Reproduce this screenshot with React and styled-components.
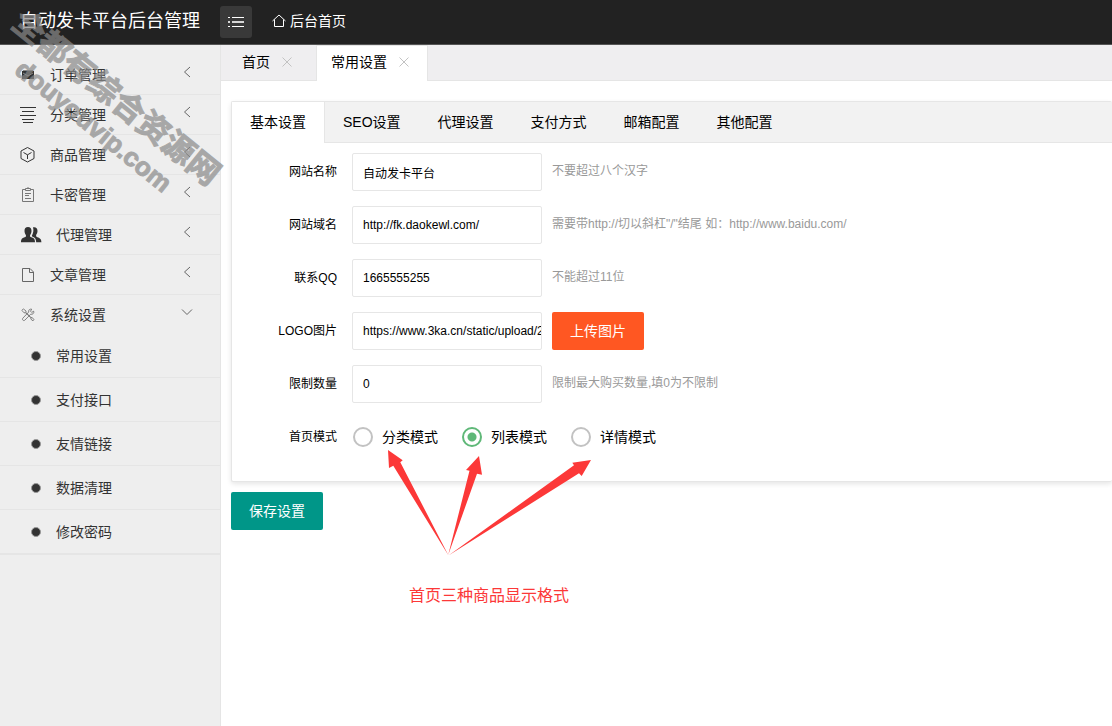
import React, { useState } from "react";
import styled, { createGlobalStyle, css } from "styled-components";

const GlobalStyle = createGlobalStyle`
  *, *::before, *::after { box-sizing: border-box; }
  body {
    margin: 0;
    background: #fff;
    color: #000;
    font: 14px/24px "Liberation Sans", "Noto Sans CJK SC", sans-serif;
  }
  button, input { font-family: inherit; }
  a { color: inherit; text-decoration: none; }
  ul { margin: 0; padding: 0; list-style: none; }
`;

const Page = styled.div`
  position: relative;
  display: flex;
  flex-direction: column;
  min-height: 100vh;
  overflow: hidden;
`;

const Header = styled.header`
  display: flex;
  align-items: center;
  height: 45px;
  background: #222;
  border-bottom: 1px solid #555;
  color: #fff;
`;

const Brand = styled.a`
  width: 220px;
  height: 44px;
  padding-left: 20px;
  font-size: 18px;
  line-height: 42px;
  white-space: nowrap;
`;

const MenuButton = styled.button`
  display: flex;
  align-items: center;
  justify-content: center;
  width: 32px;
  height: 32px;
  padding: 0;
  border: 0;
  border-radius: 3px;
  background: #393939;
  color: #fff;
`;

const HomeLink = styled.a`
  display: flex;
  align-items: center;
  gap: 4px;
  margin-left: 20px;
  padding-bottom: 2px;
`;

const Body = styled.div`
  display: flex;
  flex: 1;
`;

const Sidebar = styled.nav`
  flex: none;
  width: 221px;
  padding-top: 10px;
  background: #eee;
  border-right: 1px solid #e5e5e5;
  color: #333;
`;

const MenuItem = styled.a`
  display: flex;
  align-items: center;
  height: ${(p) => (p.$open ? "39px" : "40px")};
  padding: 0 27px 0 20px;
  border-bottom: ${(p) => (p.$open ? "0" : "1px solid #e5e5e5")};
`;

const MenuIcon = styled.span`
  display: flex;
  flex: none;
  min-width: 16px;
  margin-right: 14px;
`;

const Arrow = styled.svg`
  margin-left: auto;
  margin-bottom: 6px;
  color: #666;
`;

const SubMenu = styled.ul`
  border-bottom: 1px solid #e5e5e5;
`;

const SubItem = styled.a`
  display: flex;
  align-items: center;
  gap: 15px;
  height: 44px;
  padding-left: 31px;
  border-bottom: 1px solid #e5e5e5;
`;

const Dot = styled.span`
  width: 10px;
  height: 10px;
  border: 1px solid #999;
  border-radius: 50%;
  background: #333;
`;

const Main = styled.main`
  position: relative;
  flex: 1;
  min-width: 0;
`;

const PageTabs = styled.div`
  display: flex;
  gap: 6px;
  height: 36px;
  padding-left: 7px;
  background: #efeef0;
  border-bottom: 1px solid #e5e5e5;
`;

const PageTab = styled.div`
  display: flex;
  align-items: center;
  gap: 12px;
  height: 35px;
  padding: 0 18px 2px 14px;
  ${(p) =>
    p.$active &&
    css`
      height: 36px;
      padding-bottom: 4px;
      background: #fff;
      border: 1px solid #e5e5e5;
      border-bottom: 0;
    `}
`;

const CloseButton = styled.button`
  display: flex;
  padding: 0;
  border: 0;
  background: none;
  color: #c2c2c2;
`;

const Content = styled.form`
  padding: 20px 0 20px 10px;
`;

const Card = styled.section`
  border: 1px solid #e6e6e6;
  border-right: 0;
  border-radius: 2px;
  box-shadow: 0 2px 5px 0 rgba(0, 0, 0, 0.1);
`;

const CardTabs = styled.div`
  display: flex;
  height: 41px;
  background: #f2f2f2;
  border-bottom: 1px solid #e6e6e6;
`;

const CardTab = styled.button`
  height: 41px;
  padding: 0 18px 2px;
  border: 0;
  border-right: 1px solid ${(p) => (p.$active ? "#e6e6e6" : "transparent")};
  background: ${(p) => (p.$active ? "#fff" : "none")};
  color: #000;
  font-size: 14px;
  line-height: 38px;
  white-space: nowrap;
`;

const Fields = styled.div`
  display: flex;
  flex-direction: column;
  gap: 15px;
  padding: 10px 0 25px;
`;

const Row = styled.div`
  display: flex;
  align-items: center;
  height: 38px;
`;

const labelText = css`
  flex: none;
  width: 120px;
  padding-right: 15px;
  font-size: 12px;
  line-height: 20px;
  text-align: right;
`;

const Label = styled.label`
  ${labelText}
`;

const GroupLabel = styled.span`
  ${labelText}
`;

const TextInput = styled.input`
  flex: none;
  width: 190px;
  height: 38px;
  padding: 0 0 0 10px;
  border: 1px solid #e6e6e6;
  border-radius: 2px;
  background: #fff;
  color: #000;
  font-size: 12px;
`;

const Hint = styled.span`
  padding: 0 0 2px 10px;
  color: #999;
  font-size: 12px;
  line-height: 20px;
`;

const Button = styled.button`
  height: 38px;
  padding: 0 18px;
  border: 0;
  border-radius: 2px;
  background: ${(p) => p.$color};
  color: #fff;
  font-size: 14px;
  line-height: 38px;
  white-space: nowrap;
`;

const UploadButton = styled(Button)`
  margin-left: 10px;
`;

const SaveButton = styled(Button)`
  margin-top: 10px;
`;

const RadioGroup = styled.div`
  display: flex;
  gap: 23px;
`;

const RadioLabel = styled.label`
  display: flex;
  align-items: center;
  gap: 9px;
`;

const Radio = styled.input`
  appearance: none;
  width: 20px;
  height: 20px;
  margin: 0 0 0 1px;
  border: 2px solid #c2c2c2;
  border-radius: 50%;
  &:checked {
    border-color: #5fb878;
    background: radial-gradient(circle, #5fb878 4px, transparent 5px);
  }
`;

const Annotation = styled.figure`
  position: absolute;
  left: 160px;
  top: 400px;
  width: 230px;
  margin: 0;
  color: #fc3838;
  pointer-events: none;
`;

const Caption = styled.figcaption`
  padding: 21px 0 0 28px;
  font-size: 16px;
  line-height: 24px;
  white-space: nowrap;
`;

const ArrowDrawing = styled.svg`
  display: block;
`;

const Watermark = styled.div`
  position: absolute;
  left: -25px;
  top: 76px;
  width: 260px;
  transform: rotate(39deg);
  opacity: 0.7;
  color: #8a8a8a;
  -webkit-text-stroke: 1px #8a8a8a;
  font-weight: 700;
  line-height: 36px;
  text-align: center;
  white-space: nowrap;
  pointer-events: none;
`;

const WatermarkName = styled.div`
  font-size: 32px;
`;

const WatermarkSite = styled.div`
  font-size: 26px;
`;

const stroke = { fill: "none", stroke: "currentColor", strokeWidth: 1 };

const icons = {
  orders: (
    <svg width="16" height="16" viewBox="0 0 16 16">
      <path d="M2 4h12v8H2z" fill="#333" />
      <path d="M3 3.500h10M3 6l5 3 5-3" stroke="#888" fill="none" />
    </svg>
  ),
  category: (
    <svg width="16" height="16" viewBox="0 0 16 16" {...stroke}>
      <path d="M0 .500h16M2 4.500h12M0 8.500h16M2 12.500h12M3 15.500h10" />
    </svg>
  ),
  goods: (
    <svg width="16" height="16" viewBox="0 0 16 16" {...stroke}>
      <path d="M7.500.500 14 4v7.500l-6.500 3.500L1 11.500V4z" />
      <path d="M3.500 5.500l4 2.300 4-2.300M7.500 7.800v4.200" />
    </svg>
  ),
  cards: (
    <svg width="16" height="16" viewBox="0 0 16 16" fill="none" stroke="#777">
      <path d="M5 2.500H2.500v12h11v-12H11M5.500 1.500h5v2h-5zM8 0v2M5 6.500h6M5 8.500h4M5 11.500h6" />
    </svg>
  ),
  agents: (
    <svg width="22" height="18" viewBox="0 0 22 18" fill="currentColor">
      <path d="M8 1c2.300 0 3.600 1.600 3.500 4-.1 1.800-.6 3-1.400 3.900-.3 1.400 0 1.900 1.200 2.400 2.700 1 3.700 1.500 3.700 5H1c0-3.500 1.200-4 3.700-5 1.200-.5 1.500-1 1.200-2.400C5.100 8 4.600 6.800 4.500 5 4.400 2.600 5.700 1 8 1z" />
      <path d="M13 1.300c2.600-.7 4.600.8 4.500 3.700-.1 1.800-.6 2.900-1.300 3.700-.3 1.500 0 2 1.200 2.500 2.700 1 4 1.800 4 5.100h-5.200c-.1-3.200-1.200-4.700-3.500-5.500-.8-.3-1-.7-.7-1.300 1.300-2.300 1.900-5.400 1-8.200z" />
    </svg>
  ),
  articles: (
    <svg width="16" height="16" viewBox="0 0 16 16" fill="none" stroke="#666">
      <path d="M2.500 1.500h7.500l3.500 3.500v9.500h-11zM9.500 1.500v4h4" />
    </svg>
  ),
  system: (
    <svg width="16" height="16" viewBox="0 0 16 16" fill="none" stroke="#666">
      <path d="M2.500 2.500l1-.5 2.500 2v1.500l5 5 1.500.3 1.500 2-1 1-2-1.500-.3-1.500-5-5H4l-2-2.300zM13.700 4.200l-2 1.200-1.200-1.200 1.200-2c-2-.5-3.500 1-3 2.800L3 11c-1.500 1.500.5 3.500 2 2l5.700-5.800c2 .500 3.600-1 3-3z" strokeWidth=".8" />
    </svg>
  ),
};

const menu = [
  ["orders", "订单管理"],
  ["category", "分类管理"],
  ["goods", "商品管理"],
  ["cards", "卡密管理"],
  ["agents", "代理管理"],
  ["articles", "文章管理"],
  ["system", "系统设置"],
];
const subMenu = ["常用设置", "支付接口", "友情链接", "数据清理", "修改密码"];
const cardTabs = ["基本设置", "SEO设置", "代理设置", "支付方式", "邮箱配置", "其他配置"];
const fields = [
  { id: "name", label: "网站名称", value: "自动发卡平台", hint: "不要超过八个汉字" },
  { id: "domain", label: "网站域名", value: "http://fk.daokewl.com/", hint: "需要带http://切以斜杠\"/\"结尾 如：http://www.baidu.com/" },
  { id: "qq", label: "联系QQ", value: "1665555255", hint: "不能超过11位" },
  { id: "logo", label: "LOGO图片", value: "https://www.3ka.cn/static/upload/2", upload: true },
  { id: "limit", label: "限制数量", value: "0", hint: "限制最大购买数量,填0为不限制" },
];
const modes = ["分类模式", "列表模式", "详情模式"];

function Chevron({ open }) {
  return (
    <Arrow width="12" height="12" viewBox="0 0 12 12" {...stroke}>
      <path d={open ? "M1 3.500l5 5 5-5" : "M9 1 3.500 6 9 11"} />
    </Arrow>
  );
}

function Tab({ title, active }) {
  return (
    <PageTab $active={active}>
      <a href="#tab">{title}</a>
      <CloseButton type="button" aria-label="关闭">
        <svg width="10" height="10" viewBox="0 0 10 10" {...stroke}>
          <path d="M.5.500l9 9M9.500.500l-9 9" />
        </svg>
      </CloseButton>
    </PageTab>
  );
}

export default function App() {
  const [mode, setMode] = useState("列表模式");
  const [tab, setTab] = useState("基本设置");
  return (
    <Page>
      <GlobalStyle />
      <Header>
        <Brand href="#home">自动发卡平台后台管理</Brand>
        <MenuButton type="button" aria-label="菜单">
          <svg width="16" height="12" viewBox="0 0 16 12" {...stroke}>
            <path d="M0 1.500h2M4 1.500h12M0 10.500h2M4 10.500h12" />
            <path d="M0 6h2M4 6h12" strokeWidth="2" opacity=".8" />
          </svg>
        </MenuButton>
        <HomeLink href="#home">
          <svg width="14" height="14" viewBox="0 0 14 14" {...stroke}>
            <path d="M.5 7 7 1l6.500 6M2.500 5.500v7h9v-7" />
          </svg>
          后台首页
        </HomeLink>
      </Header>
      <Body>
        <Sidebar>
          {menu.map(([icon, title]) => (
            <MenuItem key={icon} href={`#${icon}`} $open={icon === "system"}>
              <MenuIcon>{icons[icon]}</MenuIcon>
              {title}
              <Chevron open={icon === "system"} />
            </MenuItem>
          ))}
          <SubMenu>
            {subMenu.map((title) => (
              <li key={title}>
                <SubItem href="#sub">
                  <Dot />
                  {title}
                </SubItem>
              </li>
            ))}
          </SubMenu>
        </Sidebar>
        <Main>
          <PageTabs>
            <Tab title="首页" />
            <Tab title="常用设置" active />
          </PageTabs>
          <Content onSubmit={(e) => e.preventDefault()}>
            <Card>
              <CardTabs>
                {cardTabs.map((title) => (
                  <CardTab key={title} type="button" $active={title === tab} onClick={() => setTab(title)}>
                    {title}
                  </CardTab>
                ))}
              </CardTabs>
              <Fields>
                {fields.map((f) => (
                  <Row key={f.id}>
                    <Label htmlFor={f.id}>{f.label}</Label>
                    <TextInput id={f.id} type="text" defaultValue={f.value} />
                    {f.hint && <Hint>{f.hint}</Hint>}
                    {f.upload && (
                      <UploadButton type="button" $color="#ff5722">
                        上传图片
                      </UploadButton>
                    )}
                  </Row>
                ))}
                <Row role="radiogroup" aria-labelledby="mode-label">
                  <GroupLabel id="mode-label">首页模式</GroupLabel>
                  <RadioGroup>
                    {modes.map((m) => (
                      <RadioLabel key={m}>
                        <Radio type="radio" name="mode" checked={mode === m} onChange={() => setMode(m)} />
                        {m}
                      </RadioLabel>
                    ))}
                  </RadioGroup>
                </Row>
              </Fields>
            </Card>
            <SaveButton type="submit" $color="#009688">
              保存设置
            </SaveButton>
          </Content>
          <Annotation>
            <ArrowDrawing width="230" height="118" viewBox="0 0 230 118" fill="currentColor">
              <path d="M7 5 21.700 15.300 19.300 17.300 67.500 110.500 12.300 20.700 8 23z" />
              <path d="M98 11 101 29.700 96 28.700 67.200 110 88.500 25.800 85 25z" />
              <path d="M210 15 200.700 31 198 28.300 67.500 110.500 193 20.300 191.300 17.700z" />
            </ArrowDrawing>
            <Caption>首页三种商品显示格式</Caption>
          </Annotation>
        </Main>
      </Body>
      <Watermark>
        <WatermarkName>全都有综合资源网</WatermarkName>
        <WatermarkSite>douyouvip.com</WatermarkSite>
      </Watermark>
    </Page>
  );
}
